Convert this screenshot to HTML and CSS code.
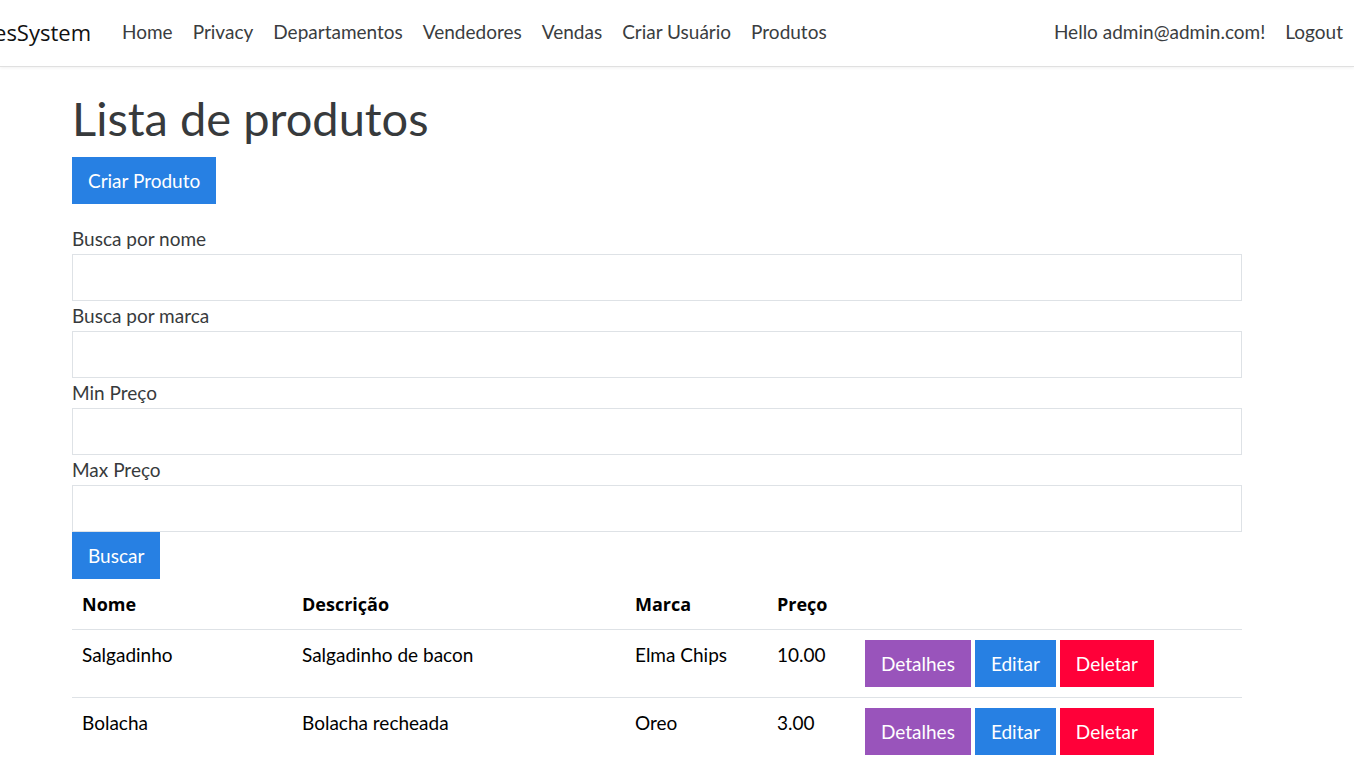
FILE: index.html
```html
<!DOCTYPE html>
<html lang="pt-BR">
<head>
<meta charset="utf-8">
<title>Lista de produtos - SalesSystem</title>
<link rel="stylesheet" href="styles.css">
</head>
<body>
<header class="navbar">
  <a class="brand" href="#"><span>SalesSystem</span></a>
  <nav class="nav-main">
    <a href="#">Home</a>
    <a href="#">Privacy</a>
    <a href="#">Departamentos</a>
    <a href="#">Vendedores</a>
    <a href="#">Vendas</a>
    <a href="#">Criar Usuário</a>
    <a href="#">Produtos</a>
  </nav>
  <nav class="nav-user">
    <a href="#">Hello admin@admin.com!</a>
    <a href="#">Logout</a>
  </nav>
</header>
<main class="container">
  <h1 class="title">Lista de produtos</h1>
  <div class="actions"><a class="btn btn-primary" href="#">Criar Produto</a></div>
  <form class="search">
    <label class="field"><span class="label">Busca por nome</span><input class="input" type="text"></label>
    <label class="field"><span class="label">Busca por marca</span><input class="input" type="text"></label>
    <label class="field"><span class="label">Min Preço</span><input class="input" type="text"></label>
    <label class="field"><span class="label">Max Preço</span><input class="input" type="text"></label>
    <div><button class="btn btn-primary" type="button">Buscar</button></div>
  </form>
  <table class="table">
    <thead>
      <tr><th class="c-nome">Nome</th><th class="c-desc">Descrição</th><th class="c-marca">Marca</th><th class="c-preco">Preço</th><th></th></tr>
    </thead>
    <tbody>
      <tr>
        <td>Salgadinho</td><td>Salgadinho de bacon</td><td>Elma Chips</td><td>10.00</td>
        <td><div class="row-actions"><a class="btn btn-info" href="#">Detalhes</a><a class="btn btn-primary" href="#">Editar</a><a class="btn btn-danger" href="#">Deletar</a></div></td>
      </tr>
      <tr>
        <td>Bolacha</td><td>Bolacha recheada</td><td>Oreo</td><td>3.00</td>
        <td><div class="row-actions"><a class="btn btn-info" href="#">Detalhes</a><a class="btn btn-primary" href="#">Editar</a><a class="btn btn-danger" href="#">Deletar</a></div></td>
      </tr>
    </tbody>
  </table>
</main>
</body>
</html>
```
FILE: styles.css
```css
html, body { margin: 0; padding: 0; }
body {
  font-family: "Lato", "Liberation Sans", sans-serif;
  font-size: 19px;
  line-height: 30px;
  color: #373a3c;
  background: #fff;
  overflow-x: hidden;
}
a { text-decoration: none; }

.navbar {
  display: flex;
  align-items: center;
  height: 67px;
  padding-bottom: 3px;
  border-bottom: 1px solid #e0e0e0;
  box-shadow: 0 1px 3px rgba(0,0,0,0.06);
  box-sizing: border-box;
}
.brand {
  display: flex;
  justify-content: flex-end;
  flex: 0 0 91px;
  width: 91px;
  min-width: 0;
  font-family: "Open Sans", "Noto Sans", sans-serif;
  font-size: 22px;
  color: #111;
  margin-right: 21px;
  white-space: nowrap;
}
.brand span { flex: none; }
.nav-main, .nav-user { display: flex; }
.nav-main { flex: 1; }
.nav-main a, .nav-user a {
  color: #3a3d40;
  padding: 0 10px;
  white-space: nowrap;
}
.nav-user { margin-right: 1px; }

.container {
  margin-left: 72px;
  width: 1170px;
}
.title {
  font-size: 47px;
  font-weight: 400;
  line-height: 60px;
  margin: 21px 0 9px;
  color: #373a3c;
}

.btn {
  display: inline-block;
  border: 0;
  font: inherit;
  font-size: 19px;
  line-height: 47px;
  height: 47px;
  padding: 0 16px;
  color: #fff;
  cursor: pointer;
  vertical-align: top;
}
.btn-primary { background: #2780e3; }
.btn-info { background: #9954bb; }
.btn-danger { background: #ff0039; }

.search { margin-top: 20px; }
.field { display: block; }
.label { display: block; line-height: 30px; }
.input {
  display: block;
  width: 100%;
  box-sizing: border-box;
  height: 47px;
  border: 1px solid #dee2e6;
  margin: 0;
  font: inherit;
}

.table {
  width: 100%;
  border-collapse: collapse;
  color: #000;
}
.table th {
  text-align: left;
  font-family: "Open Sans", "Noto Sans", sans-serif;
  font-weight: 700;
  font-size: 18px;
  padding: 10px 10px;
  line-height: 30px;
  border-bottom: 1px solid #dee2e6;
}
.table td {
  padding: 10px 10px;
  vertical-align: top;
  border-bottom: 1px solid #dee2e6;
}
.table tbody tr:last-child td { border-bottom: 0; }
.c-nome { width: 200px; }
.c-desc { width: 313px; }
.c-marca { width: 122px; }
.c-preco { width: 68px; }
.row-actions { display: flex; gap: 4px; }
```
